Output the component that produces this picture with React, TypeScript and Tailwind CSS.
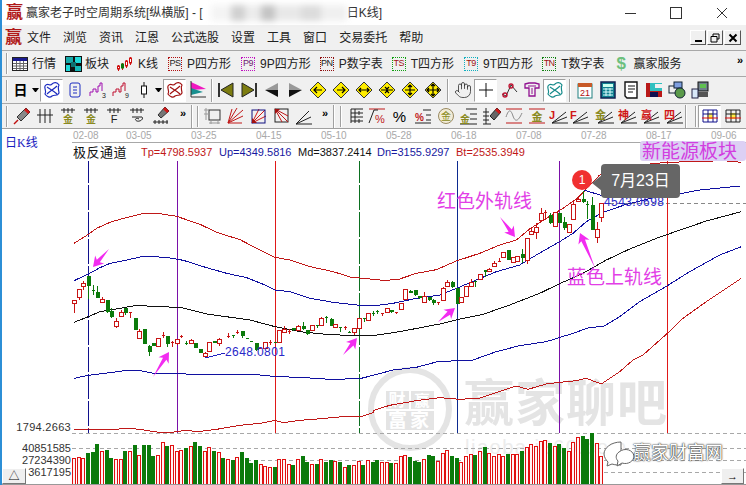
import { Hand } from "lucide-react";
import type { ReactNode } from "react";

const RED = "#c81414";
const GREEN = "#0b7a0b";
const NAVY = "#10108c";

// chart data is read off the screenshot at 3x, so the helpers scale it back
type Pt = [number, number];
const L = (p: Pt): Pt => [p[0] / 3, 125 + p[1] / 3];
const R = (p: Pt): Pt => [373 + p[0] / 3, 125 + p[1] / 3];
const LB = (p: Pt): Pt => [p[0] / 3, 360 + p[1] / 3];
const RB = (p: Pt): Pt => [373 + p[0] / 3, 360 + p[1] / 3];
const pts = (a: Pt[]) => a.map((p) => p.join(",")).join(" ");

const tpLine = [
  ...([[222, 355], [265, 328], [290, 310], [330, 292], [370, 280], [430, 265], [480, 266], [530, 274], [600, 298], [650, 322], [720, 344], [770, 370], [825, 397], [870, 405], [930, 425], [1000, 440], [1050, 456], [1119, 463]] as Pt[]).map(L),
  ...([[0, 464], [40, 466], [80, 462], [130, 445], [190, 434], [250, 408], [320, 385], [380, 360], [430, 345], [470, 312], [520, 280], [570, 250], [610, 222], [635, 197], [680, 150], [730, 132], [800, 120], [880, 112], [960, 110], [1050, 107], [1105, 112]] as Pt[]).map(R),
];
const upLine = [
  ...([[222, 467], [265, 447], [300, 428], [330, 415], [380, 405], [430, 394], [500, 397], [550, 406], [620, 428], [680, 445], [740, 458], [790, 478], [825, 495], [870, 500], [930, 520], [1000, 532], [1080, 541], [1119, 542]] as Pt[]).map(L),
  ...([[0, 543], [60, 535], [130, 520], [200, 510], [260, 486], [310, 465], [370, 440], [440, 420], [490, 390], [560, 350], [600, 325], [640, 290], [690, 262], [760, 238], [840, 218], [900, 210], [980, 195], [1100, 183]] as Pt[]).map(R),
];
const mdLine = [
  ...([[222, 592], [265, 575], [300, 560], [360, 550], [410, 541], [470, 545], [540, 547], [620, 567], [700, 578], [750, 585], [825, 605], [900, 620], [980, 628], [1060, 632], [1119, 632]] as Pt[]).map(L),
  ...([[0, 632], [80, 620], [200, 597], [260, 582], [330, 568], [410, 540], [500, 505], [560, 476], [630, 445], [700, 405], [770, 372], [850, 340], [930, 312], [1000, 288], [1105, 260]] as Pt[]).map(R),
];
const dnLine = [
  ...([[222, 55], [265, 46], [330, 38], [380, 31], [420, 32], [470, 42], [530, 40], [600, 45], [700, 44], [770, 44], [830, 50], [900, 52], [990, 58], [1080, 56], [1119, 46]] as Pt[]).map(LB),
  ...([[0, 46], [60, 30], [130, 22], [190, 6], [250, 2], [300, 0]] as Pt[]).map(RB),
  ...([[370, 680], [440, 662], [520, 650], [600, 625], [650, 607], [690, 605], [740, 575], [800, 530], [880, 484], [950, 440], [1040, 390], [1105, 365]] as Pt[]).map(R),
];
const btLine = [
  ...([[222, 208], [265, 207], [320, 210], [380, 205], [420, 208], [460, 215], [500, 219], [550, 212], [600, 214], [650, 208], [720, 196], [780, 190], [825, 181], [850, 188], [900, 181], [950, 177], [1030, 170], [1080, 171], [1119, 158]] as Pt[]).map(LB),
  ...([[0, 152], [50, 136], [130, 122], [200, 113], [260, 118], [320, 114], [380, 94], [430, 78], [465, 88], [520, 72], [560, 67], [610, 62], [640, 55], [685, 72], [740, 35], [780, 0]] as Pt[]).map(RB),
  ...([[810, 690], [880, 628], [930, 580], [1000, 530], [1105, 460]] as Pt[]).map(R),
];

// kind, x, body top, body bottom, wick top, wick bottom
type Candle = ["r" | "g", number, number, number, number, number];
const leftCandles: Candle[] = [
  ["r", 222, 524, 534, 524, 563], ["r", 237, 492, 516, 492, 524], ["r", 249, 473, 483, 468, 495], ["g", 264, 453, 483, 453, 522],
  ["g", 279, 494, 497, 480, 510], ["g", 291, 500, 518, 482, 518], ["r", 306, 522, 530, 515, 535], ["g", 321, 524, 560, 524, 565],
  ["g", 333, 558, 576, 550, 578], ["r", 348, 588, 604, 580, 608], ["r", 363, 562, 572, 555, 575], ["g", 375, 548, 565, 548, 570],
  ["r", 390, 562, 564, 562, 580], ["g", 405, 579, 615, 579, 615], ["r", 417, 618, 638, 612, 640], ["g", 432, 611, 657, 611, 657],
  ["g", 447, 664, 680, 660, 692], ["g", 459, 654, 663, 654, 663], ["r", 474, 640, 662, 640, 662], ["r", 489, 629, 631, 622, 640],
  ["g", 501, 634, 656, 634, 665], ["r", 516, 652, 654, 648, 667], ["r", 531, 643, 655, 643, 660], ["r", 543, 633, 636, 630, 638],
  ["g", 558, 653, 655, 648, 660], ["r", 573, 645, 653, 642, 656], ["g", 585, 653, 670, 653, 670], ["g", 600, 673, 683, 673, 683],
  ["r", 615, 684, 694, 682, 697], ["r", 627, 650, 677, 650, 677], ["g", 642, 649, 655, 649, 655], ["r", 657, 642, 655, 640, 662],
  ["r", 684, 632, 636, 625, 640], ["g", 699, 631, 633, 631, 640], ["r", 711, 620, 622, 615, 628], ["g", 726, 619, 633, 619, 640],
  ["g", 741, 640, 642, 640, 642], ["g", 753, 647, 650, 647, 652], ["g", 768, 655, 675, 655, 678], ["r", 780, 669, 671, 669, 671],
  ["r", 795, 650, 668, 650, 670], ["r", 810, 650, 652, 645, 660], ["g", 825, 650, 652, 650, 652], ["r", 836, 616, 652, 616, 654],
  ["r", 852, 612, 620, 603, 622], ["r", 867, 617, 619, 612, 626], ["g", 879, 608, 614, 608, 618], ["r", 894, 604, 614, 600, 616],
  ["g", 909, 602, 612, 590, 614], ["g", 921, 614, 626, 614, 630], ["r", 936, 600, 616, 600, 616], ["g", 951, 599, 601, 599, 610],
  ["r", 963, 578, 600, 575, 600], ["g", 978, 577, 579, 572, 595], ["g", 993, 582, 602, 578, 602], ["r", 1005, 596, 606, 596, 610],
  ["g", 1020, 606, 608, 606, 622], ["r", 1035, 605, 607, 603, 614], ["g", 1047, 621, 623, 618, 623], ["r", 1062, 608, 622, 608, 630],
  ["r", 1077, 580, 608, 578, 608], ["g", 1092, 579, 581, 579, 590], ["r", 1104, 564, 584, 564, 588],
];
const rightCandles: Candle[] = [
  ["g", 0, 564, 566, 558, 572], ["g", 12, 559, 561, 555, 568], ["r", 27, 564, 566, 564, 572], ["r", 42, 550, 562, 550, 562],
  ["g", 54, 555, 562, 555, 565], ["r", 69, 561, 563, 561, 568], ["r", 84, 535, 553, 535, 553], ["r", 96, 493, 523, 493, 523],
  ["g", 111, 497, 503, 495, 505], ["g", 126, 495, 511, 495, 513], ["g", 138, 512, 520, 512, 522], ["r", 153, 512, 530, 502, 532],
  ["g", 168, 516, 526, 516, 528], ["g", 180, 525, 535, 522, 540], ["r", 195, 532, 534, 532, 540], ["r", 210, 490, 524, 485, 524],
  ["r", 222, 472, 482, 465, 485], ["g", 237, 472, 487, 468, 490], ["g", 252, 490, 537, 490, 537], ["r", 264, 517, 532, 517, 532],
  ["r", 279, 484, 512, 484, 512], ["r", 294, 470, 482, 462, 482], ["g", 306, 467, 469, 467, 485], ["r", 321, 447, 463, 447, 463],
  ["g", 336, 436, 440, 436, 455], ["r", 348, 431, 438, 428, 440], ["r", 363, 414, 422, 408, 422], ["r", 378, 407, 409, 400, 412],
  ["r", 390, 380, 396, 380, 400], ["g", 405, 376, 405, 376, 405], ["r", 420, 395, 410, 395, 415], ["r", 432, 392, 408, 392, 410],
  ["g", 447, 386, 398, 372, 415], ["r", 462, 340, 405, 340, 418], ["r", 474, 318, 328, 305, 328], ["r", 489, 305, 322, 295, 342],
  ["r", 504, 265, 284, 250, 290], ["r", 516, 261, 263, 255, 285], ["g", 531, 270, 293, 265, 298], ["r", 546, 260, 302, 260, 302],
  ["g", 558, 265, 293, 265, 293], ["g", 573, 292, 310, 275, 316], ["r", 588, 298, 320, 298, 320], ["r", 600, 238, 283, 230, 283],
  ["r", 615, 222, 228, 220, 232], ["g", 630, 222, 232, 198, 235], ["g", 642, 237, 239, 228, 282], ["g", 657, 241, 314, 215, 314],
  ["r", 672, 313, 335, 292, 355], ["r", 684, 234, 275, 234, 290],
];

const volLeft: ["r" | "g", number, number][] = [
  ["r", 222, 295], ["r", 237, 292], ["r", 249, 295], ["g", 264, 279], ["g", 279, 276], ["g", 291, 252], ["r", 306, 273], ["g", 321, 270], ["g", 333, 294], ["r", 348, 297], ["r", 363, 297], ["g", 375, 273], ["r", 390, 273], ["g", 405, 255], ["r", 417, 286], ["g", 432, 255], ["g", 447, 255], ["g", 459, 288], ["r", 474, 286], ["r", 489, 247], ["g", 501, 258], ["r", 516, 255], ["r", 531, 273], ["r", 543, 270], ["g", 558, 264], ["r", 573, 258], ["g", 585, 246], ["g", 600, 258], ["r", 615, 273], ["r", 627, 262], ["g", 642, 273], ["r", 657, 277], ["g", 669, 294], ["r", 684, 297], ["g", 699, 300], ["r", 711, 292], ["g", 726, 276], ["g", 741, 294], ["g", 753, 308], ["g", 768, 300], ["r", 783, 313], ["r", 795, 318], ["r", 810, 321], ["g", 825, 321], ["r", 837, 297], ["r", 852, 297], ["r", 867, 313], ["g", 879, 315], ["r", 894, 297], ["g", 909, 288], ["g", 921, 306], ["r", 936, 312], ["g", 951, 312], ["r", 963, 297], ["g", 978, 306], ["g", 993, 300], ["r", 1005, 303], ["g", 1020, 306], ["r", 1035, 321], ["g", 1047, 315], ["r", 1062, 315], ["r", 1077, 303], ["g", 1089, 315], ["r", 1104, 300],
];
const volRight: ["r" | "g", number, number][] = [
  ["g", 0, 306], ["g", 12, 300], ["r", 27, 306], ["r", 42, 306], ["g", 54, 309], ["r", 69, 309], ["r", 84, 288], ["r", 96, 286], ["g", 111, 291], ["g", 126, 303], ["g", 138, 306], ["r", 153, 297], ["g", 168, 285], ["g", 180, 288], ["r", 195, 303], ["r", 210, 279], ["r", 222, 270], ["g", 237, 288], ["g", 252, 294], ["r", 264, 306], ["r", 279, 288], ["r", 294, 282], ["g", 306, 285], ["r", 321, 273], ["g", 336, 261], ["r", 348, 279], ["r", 363, 288], ["r", 378, 282], ["r", 390, 288], ["g", 405, 282], ["r", 420, 282], ["r", 432, 282], ["g", 447, 273], ["r", 462, 261], ["r", 474, 252], ["r", 489, 258], ["r", 504, 243], ["r", 516, 240], ["g", 531, 249], ["r", 546, 258], ["g", 558, 252], ["g", 573, 264], ["r", 588, 273], ["r", 600, 246], ["r", 615, 231], ["g", 630, 228], ["g", 642, 237], ["g", 657, 219], ["r", 672, 249], ["r", 684, 288],
];

function CandleMark({ c, off }: { c: Candle; off: number }) {
  const [k, x, t, b, wt, wb] = c;
  const px = Math.round(off + x / 3);
  const y = (v: number) => Math.round(125 + v / 3);
  const col = k === "r" ? RED : GREEN;
  const h = Math.max(y(b) - y(t), 1);
  return (
    <g shapeRendering="crispEdges">
      <line x1={px + 0.5} x2={px + 0.5} y1={y(wt)} y2={y(wb)} stroke={col} />
      {h <= 1 ? (
        <rect x={px - 1} y={y(t)} width={3} height={1} fill={col} />
      ) : k === "r" ? (
        <rect x={px - 1.5} y={y(t) + 0.5} width={4} height={h} fill="white" stroke={col} />
      ) : (
        <rect x={px - 1.5} y={y(t)} width={4} height={h} fill={col} />
      )}
    </g>
  );
}

function VolBar({ k, x, top }: { k: string; x: number; top: number }) {
  const y = Math.round(360 + top / 3);
  const px = Math.round(x - 2);
  return k === "r" ? (
    <rect x={px + 0.5} y={y + 0.5} width={3} height={484 - y} fill="#fff4f4" stroke="#e01010" shapeRendering="crispEdges" />
  ) : (
    <rect x={px} y={y} width={4} height={485 - y} fill={GREEN} shapeRendering="crispEdges" />
  );
}

function PinkArrow({ tail, tip }: { tail: Pt; tip: Pt }) {
  const dx = tip[0] - tail[0];
  const dy = tip[1] - tail[1];
  const len = Math.hypot(dx, dy);
  const ux = dx / len;
  const uy = dy / len;
  const at = (along: number, side: number): Pt => [tip[0] - ux * along - uy * side, tip[1] - uy * along + ux * side];
  return <polygon points={pts([tail, at(8, 2), at(10, 6), tip, at(10, -6), at(8, -2)])} fill="#f22cf0" />;
}

function Ico({ children }: { children: ReactNode }) {
  return (
    <svg width="18" height="18" viewBox="0 0 18 18" fill="none" strokeWidth="1">
      {children}
    </svg>
  );
}

function Btn({ children, active }: { children: ReactNode; active?: boolean }) {
  return (
    <div className={active ? "w-[23px] h-[23px] shrink-0 flex items-center justify-center bg-white border border-t-[#a0a0a0] border-l-[#a0a0a0] border-r-white border-b-white" : "w-[23px] h-[23px] shrink-0 flex items-center justify-center"}>
      {children}
    </div>
  );
}

function Caret() {
  return <div className="w-[7px] shrink-0 h-0 border-x-[3.5px] border-x-transparent border-t-[4px] border-t-black" />;
}

function Grip() {
  return <div className="w-[2px] h-[21px] shrink-0 border-l border-[#a0a0a0] bg-white" />;
}

function Sep() {
  return <div className="w-[2px] h-[23px] shrink-0 border-l border-[#a0a0a0] bg-white" />;
}

function More() {
  return <div className="w-[14px] shrink-0 -mt-[6px] text-[11px] font-bold leading-none text-black text-center">»</div>;
}

function LabelBox({ text, className }: { text: string; className: string }) {
  return (
    <span className={`w-[14px] h-[14px] shrink-0 flex items-center justify-center border border-dotted text-[9px] leading-none tracking-[-0.5px] ${className}`}>
      {text}
    </span>
  );
}

function ToolLabel({ icon, label, className }: { icon: ReactNode; label: string; className: string }) {
  return (
    <div className={`flex items-center shrink-0 ${className}`}>
      {icon}
      <span className="text-[12px] text-[#222] whitespace-nowrap">{label}</span>
    </div>
  );
}

function YellowDiamond({ children }: { children: ReactNode }) {
  return (
    <Ico>
      <polygon points="9,1 17,9 9,17 1,9" fill="#ffee00" stroke="#333" />
      <g stroke="#000" strokeWidth="1.2">{children}</g>
    </Ico>
  );
}

function FanIcon({ ch, color }: { ch: string; color: string }) {
  return (
    <svg width="20" height="18" viewBox="0 0 20 18" fill="none">
      <path d="M3 16H19M3 16L18 10M3 16L17 5" stroke="#222" />
      <text x="0" y="12" fontSize="11" fontWeight="700" fill={color}>{ch}</text>
    </svg>
  );
}

function Ticks({ children }: { children: ReactNode }) {
  return (
    <Ico>
      <path d="M2 3H16M5 1V6M9 1V6M13 1V6" stroke="#222" />
      {children}
    </Ico>
  );
}

function Weave({ color }: { color: string }) {
  return (
    <Ico>
      <path d="M2 5C5 1 7 6 9 3C11 1 14 1 16 4C14 7 16 9 16 12C14 16 12 13 9 15C7 17 4 16 2 13C4 10 1 8 2 5ZM4 6C7 8 11 10 14 13M14 5C11 8 7 10 4 13" stroke={color} strokeWidth="1.2" />
    </Ico>
  );
}

function GridIcon({ dark }: { dark?: boolean }) {
  return (
    <Ico>
      <rect x="6" y="6" width="6" height="6" fill="#ffee44" />
      <path d="M2 3H16V15H2ZM2 7H16M7 3V15M12 3V15" stroke={dark ? "#222" : NAVY} />
      <path d="M1 11H17" stroke="#e01010" />
    </Ico>
  );
}

function PencilIcon() {
  return (
    <Ico>
      <polygon points="13,1 17,5 8,14 4,10" fill="#888" stroke="#333" />
      <polygon points="13,1 17,5 15,7 11,3" fill="#d01818" />
      <path d="M1 17L5 13" stroke="#c01010" strokeWidth="1.4" />
    </Ico>
  );
}

export default function App() {
  const font = "[font-family:'Liberation_Sans','Noto_Sans_CJK_SC',sans-serif]";
  return (
    <div className={`w-[746px] h-[485px] flex flex-col overflow-hidden bg-white border-l-2 border-[#2c8fd6] ${font}`}>
      {/* title bar */}
      <div className="h-[25px] shrink-0 flex items-center pl-[4px] bg-white">
        <span className="w-[20px] text-[17px] leading-none font-bold text-[#b01818]">赢</span>
        <span className="text-[12px] text-[#333] whitespace-nowrap">赢家老子时空周期系统[纵横版] - [</span>
        <div className="w-[136px] h-[16px] ml-[8px] flex blur-[3px]">
          <div className="w-[20px] bg-[#f4f4f4]" />
          <div className="w-[14px] bg-[#d0d0d0]" />
          <div className="w-[16px] bg-[#ececec]" />
          <div className="w-[14px] bg-[#c4c4c4]" />
          <div className="w-[26px] bg-[#e8e8e8]" />
          <div className="w-[20px] bg-[#dcdcdc]" />
          <div className="w-[26px] bg-[#f0f0f0]" />
        </div>
        <span className="text-[12px] text-[#333] whitespace-nowrap">日K线]</span>
        <div className="ml-auto flex items-center pr-[17px] gap-[32px] text-[#333]">
          <svg width="14" height="14" viewBox="0 0 14 14"><path d="M2 7.5H13" stroke="#333" /></svg>
          <svg width="14" height="14" viewBox="0 0 14 14" fill="none"><rect x="1.5" y="1.5" width="11" height="11" stroke="#333" /></svg>
          <svg width="14" height="14" viewBox="0 0 14 14" fill="none"><path d="M2 2L12 12M12 2L2 12" stroke="#333" /></svg>
        </div>
      </div>

      {/* menu bar */}
      <div className="h-[25px] shrink-0 flex items-center bg-[#f0f0f0] pl-[3px] text-[12px] text-[#222]">
        <span className="w-[22px] text-[17px] leading-none font-bold text-[#b01818]">赢</span>
        <div className="flex gap-[12px]">
          {["文件", "浏览", "资讯", "江恩", "公式选股", "设置", "工具", "窗口", "交易委托", "帮助"].map((m) => (
            <span key={m}>{m}</span>
          ))}
        </div>
        <div className="ml-auto mr-[5px] flex gap-[1px]">
          <div className="w-[16px] h-[15px] flex items-end justify-center pb-[2px] border border-t-white border-l-white border-r-[#555] border-b-[#555]">
            <div className="w-[7px] h-[2px] bg-black" />
          </div>
          <div className="w-[16px] h-[15px] flex items-center justify-center border border-t-white border-l-white border-r-[#555] border-b-[#555]">
            <svg width="10" height="10" viewBox="0 0 10 10" fill="none"><path d="M3 3V1H9V6H7M1 3.5H7V9H1Z" stroke="#000" /></svg>
          </div>
          <div className="w-[17px] h-[15px] flex items-center justify-center border border-t-white border-l-white border-r-[#555] border-b-[#555]">
            <svg width="10" height="10" viewBox="0 0 10 10" fill="none"><path d="M1.5 1.5L8.5 8.5M8.5 1.5L1.5 8.5" stroke="#000" strokeWidth="2" /></svg>
          </div>
        </div>
      </div>

      {/* named toolbar */}
      <div className="h-[26px] shrink-0 flex items-center bg-[#f0f0f0] border-t border-[#a8a8a8] pl-[4px] relative">
        <Grip />
        <ToolLabel
          className="ml-[4px]"
          label="行情"
          icon={
            <svg className="mr-[4px]" width="16" height="14" viewBox="0 0 16 14" fill="none">
              <rect x="0.5" y="0.5" width="15" height="13" fill="#fff" stroke="#222" />
              <rect x="1" y="1" width="14" height="3" fill="#1a1a90" />
              <path d="M1 6.5H15M1 9H15M1 11.5H15M4.5 4V13M8 4V13M11.5 4V13" stroke="#666" />
            </svg>
          }
        />
        <ToolLabel
          className="ml-[9px]"
          label="板块"
          icon={
            <svg className="mr-[3px]" width="17" height="16" viewBox="0 0 17 16">
              <rect width="17" height="16" fill="#111" />
              <rect x="1" y="1" width="7" height="6" fill="#16a8a8" />
              <rect x="10" y="1" width="6" height="6" fill="#20d8d8" />
              <rect x="1" y="9" width="4" height="6" fill="#20d8d8" />
              <rect x="6" y="6" width="5" height="5" fill="#0e7070" />
              <rect x="10" y="10" width="6" height="5" fill="#16b8b8" />
            </svg>
          }
        />
        <ToolLabel
          className="ml-[8px]"
          label="K线"
          icon={
            <svg className="mr-[5px]" width="16" height="16" viewBox="0 0 16 16" fill="none" stroke="#d01010">
              <path d="M1.5 9V15M5.5 7V14M9.5 4V12M13.5 1V9" />
              <rect x="0.5" y="10" width="2" height="3" fill="#fff" />
              <rect x="4.5" y="8" width="2" height="4" fill="#0b7a0b" stroke="#0b7a0b" />
              <rect x="8.5" y="5" width="2" height="5" fill="#fff" />
              <rect x="12.5" y="2" width="2" height="5" fill="#fff" />
            </svg>
          }
        />
        <ToolLabel className="ml-[10px] gap-[5px]" label="P四方形" icon={<LabelBox text="PS" className="border-[#b01010] text-[#222]" />} />
        <ToolLabel className="ml-[10px] gap-[5px]" label="9P四方形" icon={<LabelBox text="P9" className="border-[#c010c0] text-[#702070]" />} />
        <ToolLabel className="ml-[9px] gap-[5px]" label="P数字表" icon={<LabelBox text="PN" className="border-[#901010] text-[#222]" />} />
        <ToolLabel className="ml-[9px] gap-[5px]" label="T四方形" icon={<LabelBox text="TS" className="border-[#10a010] text-[#a01010]" />} />
        <ToolLabel className="ml-[10px] gap-[5px]" label="9T四方形" icon={<LabelBox text="T9" className="border-[#10b0c0] text-[#a01010]" />} />
        <ToolLabel className="ml-[9px] gap-[5px]" label="T数字表" icon={<LabelBox text="TN" className="border-[#108010] text-[#a01010]" />} />
        <ToolLabel
          className="ml-[12px] gap-[6px]"
          label="赢家服务"
          icon={<span className="w-[11px] text-[17px] leading-none font-bold text-[#6cbf7c]">$</span>}
        />
        <div className="ml-auto mr-[3px] -mt-[6px] text-[11px] font-bold leading-none">»</div>
      </div>

      {/* drawing toolbar */}
      <div className="h-[27px] shrink-0 flex items-center bg-[#f0f0f0] border-t border-[#a8a8a8] pl-[4px]">
        <Grip />
        <div className="ml-[1px] w-[23px] shrink-0 text-center text-[14px] font-bold leading-none text-black">日</div>
        <Caret />
        <div className="ml-[1px] flex items-center">
          <Btn active><Weave color="#1c2cc0" /></Btn>
          <Btn>
            <Ico><rect x="4" y="2" width="10" height="14" rx="2" stroke="#1c2cc0" /><path d="M7 6H11M7 9H11M7 12H11" stroke="#1c2cc0" /></Ico>
          </Btn>
          <Btn>
            <Ico><path d="M1 15V11H4V8H7V11H9V5H11V2H13V10" stroke="#a010b0" /><text x="13" y="17" fontSize="7" fill="#222">3</text></Ico>
          </Btn>
          <Btn>
            <Ico><path d="M1 15V11H4V8H7V11H9V5H11V2H13V10" stroke="#c01030" /><text x="13" y="17" fontSize="7" fill="#222">9</text></Ico>
          </Btn>
          <Btn>
            <Ico><path d="M9 1V17" stroke="#111" /><rect x="6.5" y="5" width="5" height="8" fill="#fff" stroke="#111" /></Ico>
          </Btn>
        </div>
        <Caret />
        <div className="ml-[1px] flex items-center">
          <Btn active><Weave color="#a01010" /></Btn>
          <Btn>
            <Ico>
              <polygon points="2,1 17,8 2,9" fill="#f018c0" />
              <polygon points="2,7 14,11 2,14" fill="#189090" />
              <path d="M2 0V16H17" stroke="#333" />
            </Ico>
          </Btn>
        </div>
        <div className="ml-[2px]"><Sep /></div>
        <div className="ml-[1px] flex items-center">
          <Btn><Ico><path d="M2 2V16" stroke="#333" strokeWidth="2" /><polygon points="16,2 16,16 4,9" fill="#7c7c10" stroke="#222" /></Ico></Btn>
          <Btn><Ico><path d="M16 2V16" stroke="#333" strokeWidth="2" /><polygon points="2,2 2,16 14,9" fill="#7c7c10" stroke="#222" /></Ico></Btn>
          <Btn><Ico><polygon points="2,9 15,2 15,9" fill="#999" /><polygon points="2,9 15,9 15,16" fill="#111" /></Ico></Btn>
          <Btn><Ico><polygon points="16,9 3,2 3,9" fill="#999" /><polygon points="16,9 3,9 3,16" fill="#111" /></Ico></Btn>
          <Btn><YellowDiamond><path d="M13 9H5M8 6L5 9L8 12" /></YellowDiamond></Btn>
          <Btn><YellowDiamond><path d="M5 9H13M10 6L13 9L10 12" /></YellowDiamond></Btn>
          <Btn><YellowDiamond><path d="M4 9H14M6 7L4 9L6 11M12 7L14 9L12 11" /></YellowDiamond></Btn>
          <Btn><YellowDiamond><path d="M3 9H15M7 6L10 9L7 12M11 6L8 9L11 12" /></YellowDiamond></Btn>
          <Btn><YellowDiamond><path d="M9 4V14M4 9H14M7 6L9 4L11 6M7 12L9 14L11 12" /></YellowDiamond></Btn>
          <Btn><YellowDiamond><path d="M9 3V15M3 9H15M7 5L9 3L11 5M7 13L9 15L11 13M5 7L3 9L5 11M13 7L15 9L13 11" /></YellowDiamond></Btn>
        </div>
        <div className="ml-[3px]"><Sep /></div>
        <div className="ml-[2px] flex items-center">
          <Btn><Hand size={18} strokeWidth={1} color="#222" /></Btn>
          <Btn active><Ico><path d="M9 2V16M2 9H16" stroke="#111" /></Ico></Btn>
          <Btn>
            <Ico>
              <path d="M2 13L6 15L11 4L17 11" stroke="#333" />
              <circle cx="5" cy="14" r="2" stroke="#c01030" strokeWidth="1.4" />
              <circle cx="11" cy="5" r="2" stroke="#c01030" strokeWidth="1.4" />
            </Ico>
          </Btn>
          <Btn>
            <Ico><path d="M2 3L6 2H12L16 3V7H12V15H6V7H2Z" stroke="#901090" strokeWidth="1.3" /><path d="M5 5H13M9 7V13" stroke="#901090" /></Ico>
          </Btn>
          <Btn active><Weave color="#158a8a" /></Btn>
        </div>
        <div className="ml-[3px]"><Sep /></div>
        <div className="ml-[2px] flex items-center">
          <Btn>
            <Ico><rect x="2" y="3" width="14" height="14" fill="#fff" stroke="#208080" /><rect x="2" y="2" width="14" height="4" fill="#c85a28" /><text x="9" y="15" textAnchor="middle" fontSize="9" fill="#b01010">21</text></Ico>
          </Btn>
          <Btn>
            <Ico><rect x="2" y="1" width="14" height="16" fill="#108090" stroke="#102050" strokeWidth="1.5" /><rect x="4" y="3" width="10" height="3" fill="#cfe" /><path d="M4 8H14M4 11H14M4 14H14M7 7V15M11 7V15" stroke="#dff" /></Ico>
          </Btn>
          <Btn>
            <Ico><path d="M3 1H15V17H5L3 15Z" fill="#fff" stroke="#111" strokeWidth="1.4" /><path d="M6 5H13M6 8H13M6 11H11" stroke="#111" /></Ico>
          </Btn>
          <Btn>
            <Ico><rect x="1" y="2" width="16" height="14" fill="#b81818" /><rect x="5" y="2" width="12" height="8" fill="#30c0c0" /><rect x="5" y="11" width="8" height="5" fill="#101050" /><rect x="10" y="3" width="7" height="4" fill="#f0f0f0" /></Ico>
          </Btn>
          <Btn>
            <Ico><rect x="1" y="5" width="8" height="7" fill="#f0f0f0" stroke="#123" /><rect x="6" y="1" width="8" height="6" fill="#80a0e0" stroke="#123" /><circle cx="12" cy="12" r="5" fill="#5a9a4a" stroke="#123" /></Ico>
          </Btn>
          <Btn>
            <Ico><rect x="7" y="1" width="10" height="9" fill="#70808a" stroke="#111" /><rect x="9" y="3" width="6" height="4" fill="#60c050" /><rect x="7" y="11" width="10" height="5" fill="#555" /><rect x="1" y="8" width="6" height="9" fill="#d8e8f8" stroke="#224" /></Ico>
          </Btn>
        </div>
      </div>

      {/* indicator toolbar */}
      <div className="h-[26px] shrink-0 flex items-center bg-[#f0f0f0] border-t border-[#a8a8a8] border-b border-b-[#a0a0a0] pl-[4px]">
        <Grip />
        <div className="ml-[2px] flex items-center">
          <Btn><PencilIcon /></Btn>
          <Btn><Ico><path d="M4 2V16M9 2V16M14 2V16M1 8H17" stroke="#222" /></Ico></Btn>
          <Btn><Ticks><text x="9" y="16" textAnchor="middle" fontSize="10" fontWeight="700" fill="#8a8a20">金</text></Ticks></Btn>
          <Btn><Ticks><text x="9" y="16" textAnchor="middle" fontSize="10" fontWeight="700" fill="#8a8a20">金</text></Ticks></Btn>
          <Btn><Ticks><text x="9" y="16" textAnchor="middle" fontSize="11" fill="#222">F</text></Ticks></Btn>
          <Btn><Ticks><path d="M4 10H14C16 12 12 15 9 14C6 13 8 10 11 12" stroke="#222" /></Ticks></Btn>
          <Btn><Ico><polygon points="14,0 18,4 10,11 7,8" fill="#777" stroke="#333" /><polygon points="14,0 18,4 16,6 12,2" fill="#d01818" /><path d="M2 15H17M4 13V17M8 13V17M12 13V17M16 13V17" stroke="#222" /></Ico></Btn>
        </div>
        <div className="ml-[5px]"><More /></div>
        <div className="ml-[1px]"><Sep /></div>
        <div className="ml-[4px]"><Grip /></div>
        <div className="ml-[1px] flex items-center">
          <Btn><Ico><rect x="6" y="3" width="11" height="10" stroke="#333" /><path d="M1 3H6M1 7H6M3 1V13M6 16H17M8 14V17M15 14V17" stroke="#999" /></Ico></Btn>
          <Btn><Ico><path d="M2 16L17 3M2 16L17 9M2 16L11 1M2 16L6 2M2 16H16" stroke="#c01818" /></Ico></Btn>
          <Btn><Ico><path d="M3 16L16 3M3 16L17 9M3 16L10 2" stroke="#d01818" /><rect x="3" y="3" width="13" height="13" stroke="#101080" /><polygon points="3,16 3,11 8,16" fill="#a01010" /></Ico></Btn>
          <Btn><Ico><rect x="3" y="2" width="13" height="13" stroke="#222" /><path d="M3 2L16 15M3 2L10 15M3 2L16 9" stroke="#c01818" /><polygon points="3,2 8,2 3,7" fill="#a01010" /></Ico></Btn>
          <Btn><Ico><path d="M1 17H17M1 17L16 10M1 17L14 4" stroke="#222" /></Ico></Btn>
        </div>
        <div className="ml-[3px]"><More /></div>
        <div className="ml-[1px]"><Sep /></div>
        <div className="ml-[5px]"><Grip /></div>
        <div className="ml-[3px] flex items-center">
          <Btn><Ico><path d="M3 2V16M3 2H15M3 6H15M3 10H15M3 14H15M7 2V16M11 4V8M11 12V16" stroke="#222" /></Ico></Btn>
          <div className="-ml-[3px]">
            <Btn><Ico><path d="M1 2H17" stroke="#c01818" /><path d="M1 16L6 3H10" stroke="#222" /><text x="7" y="16" fontSize="11" fill="#c01818">%</text></Ico></Btn>
          </div>
          <Btn><span className="text-[15px] leading-none text-black">%</span></Btn>
          <Btn><Ico><path d="M9 3H17M12 8H17M12 13H17M1 16H17" stroke="#222" /><text x="1" y="14" fontSize="10" fontWeight="700" fill="#c01818">%</text></Ico></Btn>
          <Btn><Ico><circle cx="9" cy="9" r="7.5" fill="#f2ecd8" stroke="#9a8a60" /><text x="9" y="13" textAnchor="middle" fontSize="10" fill="#8a8a20">金</text></Ico></Btn>
          <Btn><Ico><path d="M6 2H17M10 7H17M10 12H17M0 17H17" stroke="#222" /><text x="0" y="16" fontSize="10" fontWeight="700" fill="#8a8a20">金</text></Ico></Btn>
          <Btn><Ico><path d="M3 1V17M0 5H6M0 9H6M0 13H6M0 17H8" stroke="#222" /><polygon points="14,1 18,5 11,13 7,9" fill="#666" stroke="#222" /><polygon points="14,1 18,5 16,7 12,3" fill="#d01818" /></Ico></Btn>
          <div className="-ml-[1px]">
            <Btn><Ico><path d="M1 2H17M1 16H17" stroke="#c01818" /><path d="M1 10C4 1 6 3 8 9C10 15 13 15 17 6" stroke="#888" /></Ico></Btn>
          </div>
          <Btn><Ico><path d="M1 2H17M1 16H17" stroke="#c01818" /><text x="9" y="14" textAnchor="middle" fontSize="11" fontWeight="700" fill="#8a8a20">金</text></Ico></Btn>
          <div className="-ml-[1px]"><Btn><FanIcon ch="J" color="#d01818" /></Btn></div>
          <div className="-ml-[2px]"><Btn><FanIcon ch="F" color="#d01818" /></Btn></div>
          <div className="ml-[2px]"><Btn><FanIcon ch="金" color="#8a8a20" /></Btn></div>
          <Btn><FanIcon ch="神" color="#d01818" /></Btn>
          <Btn><FanIcon ch="赢" color="#d01818" /></Btn>
          <Btn><FanIcon ch="四" color="#d01818" /></Btn>
        </div>
        <Sep />
        <div className="ml-[8px]"><Grip /></div>
        <div className="ml-[1px] flex items-center">
          <Btn active><GridIcon /></Btn>
          <Btn><GridIcon dark /></Btn>
        </div>
      </div>

      {/* chart panel */}
      <div className="flex-1 min-h-0 flex relative bg-white border-b border-[#999]">
        <div className="w-[70px] shrink-0 flex flex-col">
          <div className="pl-[3px] pt-[6px] text-[12px] leading-[16px] text-[#1820c0] [font-family:'Liberation_Serif','Noto_Sans_CJK_SC',serif]">日K线</div>
          <div className="mt-auto pb-[6px] pr-[1px] flex flex-col items-end text-[11px] leading-[12px] text-[#333]">
            <span className="tracking-[0.3px]">1794.2663</span>
            <span className="mt-[9px]">40851585</span>
            <span>27234390</span>
            <span>3617195</span>
          </div>
        </div>
        <div className="flex-1 min-w-0 flex flex-col">
          <div className="h-[14px] shrink-0 flex items-end border-b border-[#a8a8a8] text-[10px] leading-[12px] text-[#a8a8a8]">
            {["02-08", "03-05", "03-25", "04-15", "05-10", "05-28", "06-18", "07-08", "07-28", "08-17", "09-06"].map((d, i) => (
              <span key={d} className={i === 0 ? "w-[53px] shrink-0 pl-[1px]" : "w-[65px] shrink-0 pl-[1px]"}>{d}</span>
            ))}
          </div>
          <div className="h-[18px] shrink-0 flex items-center text-[11px] leading-none whitespace-nowrap">
            <span className="w-[69px] shrink-0 pl-[1px] text-[13px] tracking-[0.5px] text-[#111]">极反通道</span>
            <span className="w-[78px] shrink-0 text-[#c01818]">Tp=4798.5937</span>
            <span className="w-[79px] shrink-0 text-[#1818a0]">Up=4349.5816</span>
            <span className="w-[79px] shrink-0 text-[#111]">Md=3837.2414</span>
            <span className="w-[79px] shrink-0 text-[#1818a0]">Dn=3155.9297</span>
            <span className="text-[#c01818]">Bt=2535.3949</span>
          </div>
          <svg className="block" width="674" height="323" viewBox="72 161 674 323" fill="none">
            {/* watermark */}
            <g fill="#e4e4e4">
              <circle cx="410" cy="409" r="39" stroke="#e4e4e4" strokeWidth="6" fill="none" />
              <rect x="386" y="391" width="23" height="18" />
              <rect x="411" y="391" width="23" height="18" />
              <rect x="386" y="411" width="48" height="19" />
              <text x="397" y="406" textAnchor="middle" fontSize="17" fontWeight="700" fill="#fff">财</text>
              <text x="422" y="406" textAnchor="middle" fontSize="15" fontWeight="700" fill="#fff">赢</text>
              <text x="410" y="427" textAnchor="middle" fontSize="19" fontWeight="700" fill="#fff" letterSpacing="3">富家</text>
              <text x="464" y="421" fontSize="50" fontWeight="700" letterSpacing="1">赢家聊吧</text>
              <text x="465" y="454" fontSize="20" fill="#ececec" letterSpacing="1.5">liaoba.i360.com</text>
            </g>
            {/* grid */}
            <g stroke="#a8a8a8" strokeDasharray="4 3">
              <path d="M72 433.5H746M72 448.5H746M72 460.5H746M72 472.5H746" />
              <path d="M603 203.5H746" stroke="#888" />
            </g>
            <rect x="88" y="161" width="1" height="272" fill={NAVY} />
            <rect x="177" y="161" width="1" height="272" fill="#7a10a8" />
            <rect x="275" y="161" width="1" height="272" fill="#e01818" />
            <rect x="359" y="161" width="1" height="272" fill="#0b7020" />
            <rect x="457" y="161" width="1" height="272" fill="#0c2a90" />
            <rect x="559" y="161" width="1" height="272" fill="#7a10a8" />
            <rect x="667" y="161" width="1" height="272" fill="#e01818" />
            {/* the first and fourth markers are broken lines */}
            <path d="M88.5 183V433M359.5 183V433" stroke="#fff" strokeDasharray="2 25" />
            <g shapeRendering="crispEdges">
              <polyline points={pts(tpLine)} stroke="#c01818" />
              <polyline points={pts(upLine)} stroke="#1010a0" />
              <polyline points={pts(mdLine)} stroke="#111" />
              <polyline points={pts(dnLine)} stroke="#1010a0" />
              <polyline points={pts(btLine)} stroke="#c01818" />
              <polyline points="584,190 603,196" stroke="#1010a0" />
              <polyline points="205,358 225,353" stroke="#2020c0" />
            </g>
            {leftCandles.map((c) => <CandleMark key={`l${c[1]}`} c={c} off={0} />)}
            {rightCandles.map((c) => <CandleMark key={`r${c[1]}`} c={c} off={373} />)}
            {volLeft.map(([k, x, t]) => <VolBar key={`vl${x}`} k={k} x={x / 3} top={t} />)}
            {volRight.map(([k, x, t]) => <VolBar key={`vr${x}`} k={k} x={373 + x / 3} top={t} />)}
            <text x="225" y="356" fontSize="12" letterSpacing="0.4" fill="#2828c8">2648.0801</text>
            <text x="604" y="206" fontSize="12" letterSpacing="0.4" fill="#2828c8">4543.0698</text>
            <PinkArrow tail={[109, 249]} tip={[93, 267]} />
            <PinkArrow tail={[153, 377]} tip={[169, 352]} />
            <PinkArrow tail={[343, 355]} tip={[357, 338]} />
            <PinkArrow tail={[438, 322]} tip={[455, 308]} />
            <PinkArrow tail={[500, 217]} tip={[515, 237]} />
            <PinkArrow tail={[595, 268]} tip={[580, 233]} />
            {/* wechat mark */}
            <path d="M621 442C611 442 604 448 604 454C604 457 606 460 608 462L607 466L612 464C615 465 618 465 621 465Z" fill="#fff" stroke="#666" />
            <path d="M619 452C625 447 633 450 634 456C634 461 628 465 622 463L617 466L618 461C615 458 616 454 619 452Z" fill="#fff" stroke="#666" />
          </svg>
        </div>

        {/* overlays on the chart */}
        <div className="absolute left-[0px] top-[339px] w-[24px] h-[16px] flex items-center justify-center bg-[#efefef] border border-t-white border-l-white border-r-[#777] border-b-[#777] text-[11px] leading-none text-black">△</div>
        <div className="absolute right-[2px] top-[339px] w-[23px] h-[16px] flex items-center justify-center bg-[#efefef] border border-t-white border-l-white border-r-[#777] border-b-[#777] text-[11px] leading-none text-black">→</div>
        <div className="absolute left-[435px] top-[63px] text-[19px] leading-none whitespace-nowrap text-[#e23fe6]">红色外轨线</div>
        <div className="absolute left-[565px] top-[139px] text-[19px] leading-none whitespace-nowrap text-[#e23fe6]">蓝色上轨线</div>
        <div className="absolute left-[638px] top-[12px] w-[106px] h-[20px] flex items-center pl-[2px] bg-[#dcd0f4] text-[19px] leading-none whitespace-nowrap text-[#d23ee0] rounded-[3px]">新能源板块</div>
        <div className="absolute left-[599px] top-[35px] w-[79px] h-[34px] flex items-center justify-center rounded-[4px] bg-[#666] text-[16px] leading-none whitespace-nowrap text-white">7月23日</div>
        <div className="absolute left-[590px] top-[46px] w-0 h-0 border-y-[8px] border-y-transparent border-r-[10px] border-r-[#666]" />
        <div className="absolute left-[570px] top-[41px] w-[20px] h-[20px] flex items-center justify-center rounded-full bg-[#f03030] text-[12px] leading-none text-white">1</div>
        <div className="absolute left-[631px] top-[315px] text-[18px] leading-none whitespace-nowrap text-white [text-shadow:0_0_2px_#222,0_0_1px_#222]">赢家财富网</div>
      </div>
    </div>
  );
}
